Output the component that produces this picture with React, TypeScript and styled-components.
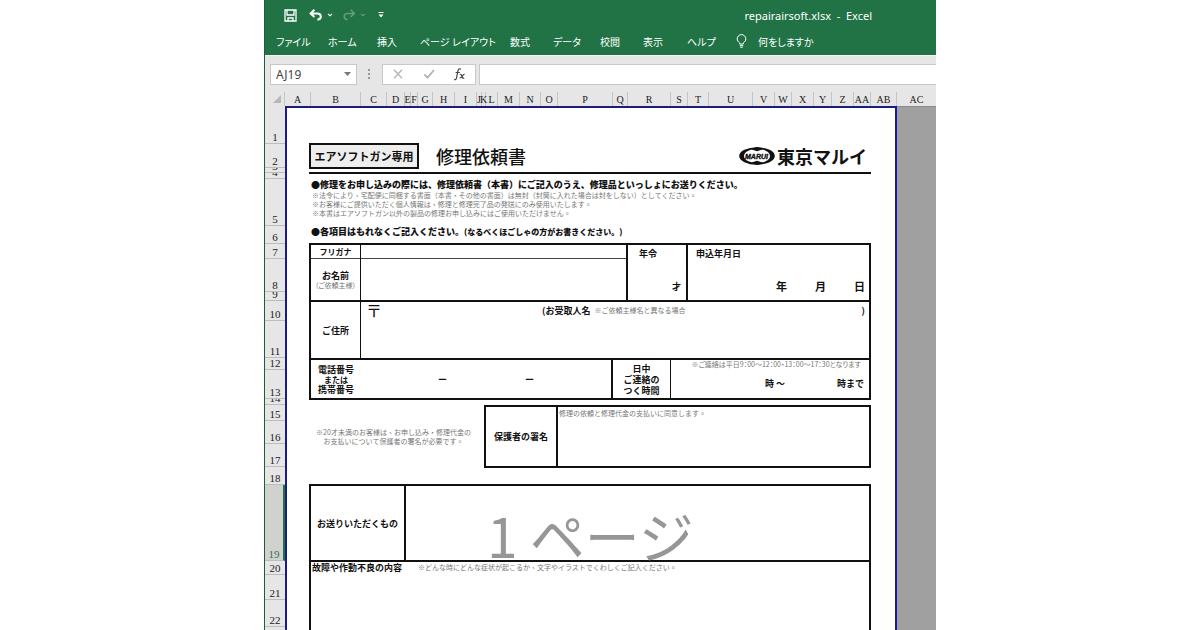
import React from "react";
import styled, { createGlobalStyle } from "styled-components";

const UI = `"Noto Sans", "Noto Sans CJK JP", sans-serif`;
const JP = `"Noto Sans CJK JP", sans-serif`;
const NOTE = `"Noto Sans CJK TC", sans-serif`;
const SERIF = `"Liberation Serif", serif`;

const GlobalStyle = createGlobalStyle`
  * { box-sizing: border-box; }
  body { margin: 0; background: #fff; }
  button, input { font: inherit; border: 0; padding: 0; margin: 0; background: none; color: inherit; }
  p, h1, h2 { margin: 0; font-size: inherit; font-weight: inherit; }
`;

const Window = styled.div`
  max-width: 672px;
  height: 100vh;
  margin: 0 auto;
  display: flex;
  flex-direction: column;
  overflow: hidden;
  border-left: 1px solid #1f5c3a;
  background: #e6e6e6;
  font-family: ${UI};
`;

/* ---------- ribbon ---------- */

const Ribbon = styled.header`
  background: #217346;
  color: #fff;
  height: 55px;
  flex: none;
`;

const TitleBar = styled.div`
  display: flex;
  align-items: center;
  justify-content: space-between;
  height: 30px;
  padding: 0 64px 0 19px;
  font-size: 11px;
  white-space: pre;
`;

const QuickTools = styled.div`
  display: flex;
  align-items: center;
`;

const ToolButton = styled.button<{ $w: number; $dim?: boolean }>`
  display: flex;
  width: ${(p) => p.$w}px;
  opacity: ${(p) => (p.$dim ? 0.3 : 1)};
`;

const Tabs = styled.nav`
  display: flex;
  height: 22px;
  padding-left: 11px;
  font-size: 10px;
  font-feature-settings: "palt";
`;

const Tab = styled.button<{ $w: number }>`
  flex: 0 0 ${(p) => p.$w}px;
  display: flex;
  align-items: center;
  gap: 11px;
  white-space: nowrap;
`;

/* ---------- formula bar ---------- */

const FormulaBar = styled.div`
  display: flex;
  align-items: center;
  flex: none;
  height: 37px;
  padding-left: 5px;
  border-top: 1px solid #f4f4f4;
`;

const Box = styled.div<{ $w: number }>`
  display: flex;
  align-items: center;
  justify-content: space-between;
  width: ${(p) => p.$w}px;
  height: 21px;
  padding: 0 5px;
  background: #fff;
  border: 1px solid #c8c8c8;
  font-size: 12px;
  color: #444;
  input { width: 60px; outline: 0; }
  button { display: flex; }
`;

const Grip = styled.svg`
  margin: 0 12px 0 11px;
`;

const FormulaInput = styled.input`
  flex: 1;
  min-width: 0;
  height: 21px;
  margin-left: 3px;
  padding: 0 4px;
  background: #fff;
  border: 1px solid #c8c8c8;
  border-right: 0;
`;

/* ---------- grid headers ---------- */

const ColumnHeads = styled.div`
  display: flex;
  flex: none;
  height: 14px;
  font: 10px/15px ${SERIF};
  color: #222;
`;

const Corner = styled.div`
  flex: 0 0 20px;
  display: flex;
  justify-content: flex-end;
  align-items: flex-end;
  padding: 0 3px 3px 0;
  border-right: 1px solid #c4c4c4;
`;

const ColumnHead = styled.div<{ $w?: number }>`
  flex: ${(p) => (p.$w ? `0 0 ${p.$w}px` : "1 1 0")};
  display: flex;
  justify-content: center;
  min-width: 0;
  border-right: ${(p) => (p.$w ? "1px solid #c4c4c4" : "0")};
`;

const Body = styled.div`
  display: flex;
  flex: 1;
  min-height: 0;
`;

const RowHeads = styled.div`
  flex: 0 0 20px;
  font: 11px/11px ${SERIF};
  color: #222;
`;

const RowHead = styled.div<{ $h: number; $active?: boolean }>`
  display: flex;
  align-items: flex-end;
  justify-content: center;
  height: ${(p) => p.$h}px;
  overflow: hidden;
  border-bottom: 1px solid #bdbdbd;
  background: ${(p) => (p.$active ? "#d0d2d0" : "#e6e6e6")};
  color: ${(p) => (p.$active ? "#3f6b52" : "#222")};
  border-right: ${(p) => (p.$active ? "2px solid #217346" : "0")};
`;

const Sheet = styled.main`
  position: relative;
  flex: 1;
  min-width: 0;
  display: flex;
  flex-direction: column;
  padding: 35px 24px 0 22px;
  background: #fff;
  border: solid #1c1c80;
  border-width: 2px 2px 0 2px;
  font-family: ${JP};
  color: #111;
`;

const OutOfPage = styled.div`
  flex: 0 0 39px;
  border-top: 1px solid #8c8c8c;
  border-left: 1px solid #9a9ae0;
  background: #a0a0a0;
`;

/* ---------- repair form ---------- */

const FormHead = styled.div`
  display: flex;
  flex: none;
  align-items: center;
  height: 31px;
  padding-bottom: 3px;
  border-bottom: 2px solid #111;
`;

const Tag = styled.div`
  width: 110px;
  height: 26px;
  border: 2px solid #111;
  background: #eee;
  font: 700 11px/22px ${JP};
  text-align: center;
  white-space: nowrap;
`;

const Title = styled.h1`
  flex: 1;
  padding-left: 17px;
  font: 500 18px/26px ${JP};
`;

const Brand = styled.div`
  display: flex;
  align-items: center;
  gap: 2px;
  padding-right: 4px;
  font: 700 18px/26px ${JP};
`;

const Lead = styled.p`
  padding-left: 2px;
  font: 900 9px/13px ${JP};
  white-space: nowrap;
  small { font-size: 8px; }
`;

const Note = styled.p<{ $tight?: boolean }>`
  font: 7px/9px ${NOTE};
  font-feature-settings: ${(p) => (p.$tight ? '"palt"' : "normal")};
  color: #777;
  white-space: nowrap;
`;

const Notes = styled.div`
  height: 34px;
  padding-left: 3px;
`;

const Intro = styled.section`
  flex: none;
  padding-top: 4px;
  height: 69px;
`;

const FormBox = styled.section`
  flex: none;
  border: 2px solid #111;
  font: 700 9px/11px ${JP};
`;

const Line = styled.div<{ $h: number; $last?: boolean }>`
  display: flex;
  height: ${(p) => p.$h}px;
  border-bottom: ${(p) => (p.$last ? "0" : "2px solid #111")};
`;

const Cell = styled.div<{ $w?: number; $rule?: number; $center?: boolean }>`
  flex: ${(p) => (p.$w ? `0 0 ${p.$w}px` : "1 1 0")};
  min-width: 0;
  display: flex;
  flex-direction: column;
  justify-content: ${(p) => (p.$center ? "center" : "space-between")};
  align-items: ${(p) => (p.$center ? "center" : "stretch")};
  border-right: ${(p) => p.$rule ?? 0}px solid #111;
  white-space: nowrap;
`;

const Furigana = styled.div`
  display: flex;
  align-items: center;
  justify-content: center;
  height: 14px;
  border-bottom: 1px solid #444;
  font-size: 8px;
`;

const Small = styled.span`
  font-size: 8px;
  line-height: 9px;
`;

const Centered = styled.div`
  flex: 1;
  display: flex;
  flex-direction: column;
  align-items: center;
  justify-content: center;
`;

const Strip = styled.div<{ $pad: string; $gap?: number; $end?: boolean; $size?: number }>`
  display: flex;
  align-items: center;
  justify-content: ${(p) => (p.$end ? "flex-end" : "flex-start")};
  gap: ${(p) => p.$gap ?? 0}px;
  padding: ${(p) => p.$pad};
  font-size: ${(p) => p.$size ?? 9}px;
`;

const Postal = styled.span`
  flex: 1;
  font-size: 16px;
  font-weight: 400;
`;

const Recipient = styled.div`
  display: flex;
  align-items: center;
  gap: 4px;
  width: 323px;
`;

const Closing = styled.span`
  margin-left: auto;
`;

const Consent = styled.div`
  display: flex;
  flex: none;
  justify-content: space-between;
  align-items: center;
  padding: 5px 0 16px;
`;

const ConsentNote = styled.div`
  flex: 1;
  text-align: center;
  padding-right: 6px;
`;

const ConsentBox = styled(FormBox)`
  flex: 0 0 387px;
`;

const Watermark = styled.div`
  position: absolute;
  left: 200px;
  top: 384px;
  font: 400 55px/84px ${JP};
  color: #969696;
  white-space: pre;
  pointer-events: none;
`;

const tabs: [string, number][] = [
  ["ファイル", 52],
  ["ホーム", 49],
  ["挿入", 43],
  ["ページ レイアウト", 90],
  ["数式", 43],
  ["データ", 47],
  ["校閲", 43],
  ["表示", 44],
  ["ヘルプ", 49],
];

const columns: [string, number][] = [
  ["A", 26], ["B", 50], ["C", 26], ["D", 18], ["E", 6], ["F", 7], ["G", 15],
  ["H", 22], ["I", 22], ["J", 5], ["K", 4], ["L", 12], ["M", 22], ["N", 21],
  ["O", 17], ["P", 55], ["Q", 15], ["R", 43], ["S", 17], ["T", 21], ["U", 44],
  ["V", 22], ["W", 17], ["X", 22], ["Y", 18], ["Z", 22], ["AA", 17], ["AB", 26],
];

const rows = [
  38, 24, 5, 6, 47, 18, 15, 33, 9, 20, 37, 12, 29, 6, 16, 23, 23, 18, 76, 14, 25, 27, 25,
];

const Caret = () => (
  <svg width="6" height="4" viewBox="0 0 6 4">
    <path d="M1 .8 3 2.8 5 .8" fill="none" stroke="#fff" strokeWidth="1.1" />
  </svg>
);

const undoPath = "M5.4 .8 1.600 4.400 5.400 8M2 4.400h6.200c2.400 0 3.600 1.300 3.600 3s-1.200 3-3.400 3.400";

export default function App() {
  return (
    <>
      <GlobalStyle />
      <Window>
        <Ribbon>
          <TitleBar>
            <QuickTools>
              <ToolButton $w={25} aria-label="上書き保存">
                <svg width="13" height="13" viewBox="0 0 13 13" fill="none" stroke="#fff" strokeWidth="1.3">
                  <path d="M1 1h11v11H1zM3 1v5h7V1M4 12V9h5v3" />
                </svg>
              </ToolButton>
              <ToolButton $w={18} aria-label="元に戻す">
                <svg width="14" height="12" viewBox="0 0 14 12" fill="none" stroke="#fff" strokeWidth="2">
                  <path d={undoPath} />
                </svg>
              </ToolButton>
              <ToolButton $w={15} aria-label="元に戻す一覧"><Caret /></ToolButton>
              <ToolButton $w={18} $dim aria-label="やり直し">
                <svg width="14" height="12" viewBox="0 0 14 12" fill="none" stroke="#fff" strokeWidth="1.500">
                  <path d={undoPath} transform="matrix(-1 0 0 1 14 0)" />
                </svg>
              </ToolButton>
              <ToolButton $w={18} $dim aria-label="やり直し一覧"><Caret /></ToolButton>
              <ToolButton $w={8} aria-label="カスタマイズ">
                <svg width="6" height="6" viewBox="0 0 6 6" fill="#fff">
                  <path d="M.5 0h5v1h-5zM.5 2.400h5L3 5.400z" />
                </svg>
              </ToolButton>
            </QuickTools>
            <span>repairairsoft.xlsx  -  Excel</span>
          </TitleBar>
          <Tabs>
            {tabs.map(([name, w]) => (
              <Tab key={name} $w={w}>{name}</Tab>
            ))}
            <Tab $w={90}>
              <svg width="11" height="14" viewBox="0 0 11 14" fill="none" stroke="#fff" strokeWidth="1">
                <path d="M3.600 10V8.800C2.200 7.800 1.200 6.600 1.200 4.900a4.300 4.300 0 0 1 8.600 0c0 1.700-1 2.900-2.400 3.900V10zM3.800 11.600h3.400M4.200 13.200h2.600" />
              </svg>
              何をしますか
            </Tab>
          </Tabs>
        </Ribbon>

        <FormulaBar>
          <Box $w={87}>
            <input aria-label="名前ボックス" defaultValue="AJ19" />
            <button aria-label="名前の一覧">
              <svg width="7" height="4" viewBox="0 0 7 4"><path d="M0 0h7L3.500 4z" fill="#777" /></svg>
            </button>
          </Box>
          <Grip width="2" height="11" viewBox="0 0 2 11" fill="#999">
            <path d="M0 0h2v2H0zM0 4h2v2H0zM0 8h2v2H0z" />
          </Grip>
          <Box $w={94}>
            <button aria-label="キャンセル">
              <svg width="20" height="10" viewBox="0 0 20 10"><path d="M6 .8 14 9.200M14 .8 6 9.200" stroke="#b4b4b4" strokeWidth="1.300" /></svg>
            </button>
            <button aria-label="入力">
              <svg width="20" height="10" viewBox="0 0 20 10"><path d="M5.500 5.500 8.500 8.600 15 1" fill="none" stroke="#b4b4b4" strokeWidth="1.800" /></svg>
            </button>
            <button aria-label="関数の挿入">
              <svg width="20" height="15" viewBox="0 0 20 15" fill="none" stroke="#444" strokeWidth="1.200">
                <path d="M11 2.200c-1.700-1-2.700 0-3.100 1.800L6.500 11c-.3 1.500-1.200 2-2.300 1.400M5.600 5.500h4.200" />
                <path d="M9.800 7.500c1.200-.6 1.700.3 2 1.500.4 1.700.9 2.700 2.400 2M14.600 7.500c-2-.5-2.700 3.900-5 3.500" />
              </svg>
            </button>
          </Box>
          <FormulaInput aria-label="数式バー" />
        </FormulaBar>

        <ColumnHeads>
          <Corner>
            <svg width="8" height="8" viewBox="0 0 8 8"><path d="M8 0v8H0z" fill="#b8b8b8" /></svg>
          </Corner>
          {columns.map(([name, w]) => (
            <ColumnHead key={name} $w={w}>{name}</ColumnHead>
          ))}
          <ColumnHead>AC</ColumnHead>
        </ColumnHeads>

        <Body>
          <RowHeads>
            {rows.map((h, i) => (
              <RowHead key={i} $h={h} $active={i === 18}>{i + 1}</RowHead>
            ))}
          </RowHeads>

          <Sheet>
            <FormHead>
              <Tag>エアソフトガン専用</Tag>
              <Title>修理依頼書</Title>
              <Brand>
                <svg width="36" height="18" viewBox="0 0 36 18">
                  <ellipse cx="18" cy="9" rx="17.800" ry="8.700" fill="#111" />
                  <ellipse cx="18" cy="9" rx="13" ry="7.200" fill="#fff" />
                  <path d="M11 2 18 4.200 25 2 18 0zM11 16 18 13.800 25 16 18 18z" fill="#111" />
                  <text x="17.500" y="12" textAnchor="middle" fontFamily="Liberation Sans" fontStyle="italic" fontWeight="700" fontSize="7" fill="#111" stroke="#111" strokeWidth=".4">MARUI</text>
                </svg>
                東京マルイ
              </Brand>
            </FormHead>

            <Intro>
              <Lead>●修理をお申し込みの際には、修理依頼書（本書）にご記入のうえ、修理品といっしょにお送りください。</Lead>
              <Notes>
                <Note>※法令により、宅配便に同梱する書面（本書・その他の書面）は無封（封筒に入れた場合は封をしない）としてください。</Note>
                <Note>※お客様にご提供いただく個人情報は、修理と修理完了品の発送にのみ使用いたします。</Note>
                <Note>※本書はエアソフトガン以外の製品の修理お申し込みにはご使用いただけません。</Note>
              </Notes>
              <Lead>●各項目はもれなくご記入ください。<small>(なるべくほごしゃの方がお書きください。)</small></Lead>
            </Intro>

            <FormBox>
              <Line $h={57}>
                <Cell $w={50} $rule={1}>
                  <Furigana>フリガナ</Furigana>
                  <Centered>
                    お名前
                    <Note $tight>（ご依頼主様）</Note>
                  </Centered>
                </Cell>
                <Cell $rule={2}>
                  <Furigana />
                </Cell>
                <Cell $w={60} $rule={2}>
                  <Strip $pad="3px 0 0 11px">年令</Strip>
                  <Strip $pad="0 5px 8px 0" $end>才</Strip>
                </Cell>
                <Cell $w={181}>
                  <Strip $pad="3px 0 0 8px">申込年月日</Strip>
                  <Strip $pad="0 4px 8px 0" $gap={28} $end $size={11}>
                    <span>年</span><span>月</span><span>日</span>
                  </Strip>
                </Cell>
              </Line>
              <Line $h={58}>
                <Cell $w={50} $rule={1} $center>ご住所</Cell>
                <Cell>
                  <Strip $pad="3px 4px 0 5px">
                    <Postal>〒</Postal>
                    <Recipient>
                      <span>(お受取人名</span>
                      <Note>※ご依頼主様名と異なる場合</Note>
                      <Closing>)</Closing>
                    </Recipient>
                  </Strip>
                </Cell>
              </Line>
              <Line $h={38} $last>
                <Cell $w={50} $center>
                  <span>電話番号</span>
                  <Small>または</Small>
                  <span>携帯番号</span>
                </Cell>
                <Cell $rule={2} $center>
                  <Strip $pad="0" $gap={78}><span>ー</span><span>ー</span></Strip>
                </Cell>
                <Cell $w={58} $rule={1} $center>
                  <span>日中</span><span>ご連絡の</span><span>つく時間</span>
                </Cell>
                <Cell $w={198}>
                  <Strip $pad="0 8px 0 0" $end>
                    <Note $tight>※ご連絡は平日9：00～12：00・13：00～17：30となります</Note>
                  </Strip>
                  <Strip $pad="0 5px 9px 0" $gap={52} $end>
                    <span>時 ～</span><span>時まで</span>
                  </Strip>
                </Cell>
              </Line>
            </FormBox>

            <Consent>
              <ConsentNote>
                <Note>※20才未満のお客様は、お申し込み・修理代金の</Note>
                <Note>お支払いについて保護者の署名が必要です。</Note>
              </ConsentNote>
              <ConsentBox>
                <Line $h={59} $last>
                  <Cell $w={72} $rule={2} $center>保護者の署名</Cell>
                  <Cell>
                    <Strip $pad="2px 1px">
                      <Note>修理の依頼と修理代金の支払いに同意します。</Note>
                    </Strip>
                  </Cell>
                </Line>
              </ConsentBox>
            </Consent>

            <FormBox>
              <Line $h={76}>
                <Cell $w={95} $rule={2} $center>お送りいただくもの</Cell>
                <Cell />
              </Line>
              <Line $h={100} $last>
                <Cell>
                  <Strip $pad="0 1px" $gap={16}>
                    <span>故障や作動不良の内容</span>
                    <Note>※どんな時にどんな症状が起こるか、文字やイラストでくわしくご記入ください。</Note>
                  </Strip>
                </Cell>
              </Line>
            </FormBox>
            <Watermark>1 ページ</Watermark>
          </Sheet>
          <OutOfPage />
        </Body>
      </Window>
    </>
  );
}
